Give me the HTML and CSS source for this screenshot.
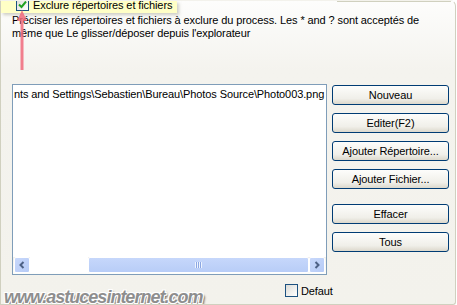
FILE: index.html
```html
<!DOCTYPE html>
<html lang="fr">
<head>
    <meta charset="UTF-8">
    <title>Exclure répertoires et fichiers</title>
    <link rel="stylesheet" href="styles.css">
</head>
<body>

<div class="group">
    <div class="legend">
        <span class="check checked">
            <svg width="9" height="9" viewBox="0 0 9 9"><path d="M1 4.5 L3.5 7 L8 1.5" fill="none" stroke="#21a121" stroke-width="2"/></svg>
        </span>
        <span class="legend-text">Exclure répertoires et fichiers</span>
    </div>

    <p class="desc">Préciser les répertoires et fichiers à exclure du process. Les * and ? sont acceptés de même que Le glisser/déposer depuis l'explorateur</p>

    <div class="main">
        <div class="listbox">
            <div class="rows">
                <div class="row">nts and Settings\Sebastien\Bureau\Photos Source\Photo003.png</div>
            </div>
            <div class="hscroll">
                <span class="sbtn">
                    <svg width="8" height="8" viewBox="0 0 8 8"><path d="M5.5 1 L2.5 4 L5.5 7" fill="none" stroke="#4d6185" stroke-width="2"/></svg>
                </span>
                <span class="track-left"></span>
                <span class="thumb"><span class="grip"></span></span>
                <span class="sbtn">
                    <svg width="8" height="8" viewBox="0 0 8 8"><path d="M2.5 1 L5.5 4 L2.5 7" fill="none" stroke="#4d6185" stroke-width="2"/></svg>
                </span>
            </div>
        </div>
        <div class="buttons">
            <button>Nouveau</button>
            <button>Editer(F2)</button>
            <button>Ajouter Répertoire...</button>
            <button>Ajouter Fichier...</button>
            <button class="sep">Effacer</button>
            <button>Tous</button>
        </div>
    </div>

    <div class="footer">
        <span class="check"></span>
        <span>Defaut</span>
    </div>

    <div class="arrow">
        <svg width="14" height="62" viewBox="0 0 14 62"><path d="M7 0 L12 11 L8.5 11 L8.5 60 L5.5 60 L5.5 11 L2 11 Z" fill="#f0687a" fill-opacity="0.85"/></svg>
    </div>

    <div class="watermark">www.astucesinternet.com</div>
</div>

</body>
</html>
```

FILE: styles.css
```css
body {
    margin: 0;
    width: 457px;
    height: 305px;
    overflow: hidden;
    font-family: "Liberation Sans", Arial, sans-serif;
    font-size: 11px;
    letter-spacing: -0.1px;
    color: #000;
    background: #fff;
}

.group {
    position: relative;
    width: 454px;
    height: 303px;
    border: 1px solid #d0d0bf;
    border-top-color: transparent;
    border-radius: 0 6px 3px 0;
    background: linear-gradient(#fdfdfc 0, #f4f3ee 70px, #f3f2ec 100%);
    overflow: hidden;
}

/* top edge of the group box, only visible right of the label */
.group::before {
    content: "";
    position: absolute;
    top: 0;
    left: 336px;
    right: 4px;
    border-top: 1px solid #d0d0bf;
}

.legend {
    display: flex;
    align-items: flex-start;
    width: 176px;
    height: 12px;
    background: #ffffc6;
    box-shadow: 2px 2px 3px rgba(120, 120, 100, 0.35);
}

.check {
    display: flex;
    align-items: center;
    justify-content: center;
    width: 11px;
    height: 11px;
    border: 1px solid #1c5180;
    background: linear-gradient(135deg, #dcdcd7, #fff);
}

.legend .check {
    margin: -3px 0 0 15px;
}

.legend-text {
    margin: -2px 0 0 4px;
    line-height: 13px;
}

.desc {
    margin: 1px 0 0 11px;
    width: 420px;
    line-height: 13px;
}

.main {
    display: flex;
    margin-top: 44px;
    margin-left: 11px;
}

.listbox {
    display: flex;
    flex-direction: column;
    width: 313px;
    height: 189px;
    border: 1px solid #7f9db9;
    background: #fff;
}

.rows {
    flex: 1;
    padding: 3px 0 0 1px;
    overflow: hidden;
}

.row {
    white-space: nowrap;
    line-height: 13px;
}

.hscroll {
    display: flex;
    height: 16px;
    padding: 0 1px 1px;
    background: linear-gradient(#f3f1ec, #fefefb);
}

.sbtn {
    display: flex;
    align-items: center;
    justify-content: center;
    width: 14px;
    height: 14px;
    border: 1px solid #fff;
    border-radius: 2px;
    background: linear-gradient(135deg, #c8d8fb, #b6cbf6);
}

.track-left {
    width: 58px;
    background: #fff;
}

.thumb {
    display: flex;
    align-items: center;
    justify-content: center;
    flex: 1;
    border: 1px solid #fff;
    border-radius: 2px;
    background: linear-gradient(#c6d7fb, #b8cdf7);
}

.grip {
    width: 7px;
    height: 6px;
    background: repeating-linear-gradient(90deg, #eef4fe 0, #eef4fe 1px, #8ca7e2 1px, #8ca7e2 2px);
}

.buttons {
    display: flex;
    flex-direction: column;
    gap: 8px;
    margin: 1px 0 0 5px;
}

button {
    width: 117px;
    height: 20px;
    padding: 0;
    font-family: "Liberation Sans", Arial, sans-serif;
    font-size: 11px;
    letter-spacing: -0.1px;
    color: #000;
    border: 1px solid #003c74;
    border-radius: 3px;
    background: linear-gradient(#fdfdfb, #f0efe9 70%, #dcd8cc);
}

.buttons .sep {
    margin-top: 7px;
}

.footer {
    display: flex;
    align-items: center;
    gap: 3px;
    margin: 9px 0 0 284px;
}

.arrow {
    position: absolute;
    left: 14px;
    top: 9px;
}

.watermark {
    position: absolute;
    left: 3px;
    bottom: -4px;
    font-size: 18px;
    font-weight: bold;
    font-style: italic;
    color: #8e8e8e;
    letter-spacing: -1px;
    text-shadow: -1px -1px 0 #fff, 1px 1px 0 #fff, 1px -1px 0 #fff, -1px 1px 0 #fff, 2px 2px 2px #666;
}
```
